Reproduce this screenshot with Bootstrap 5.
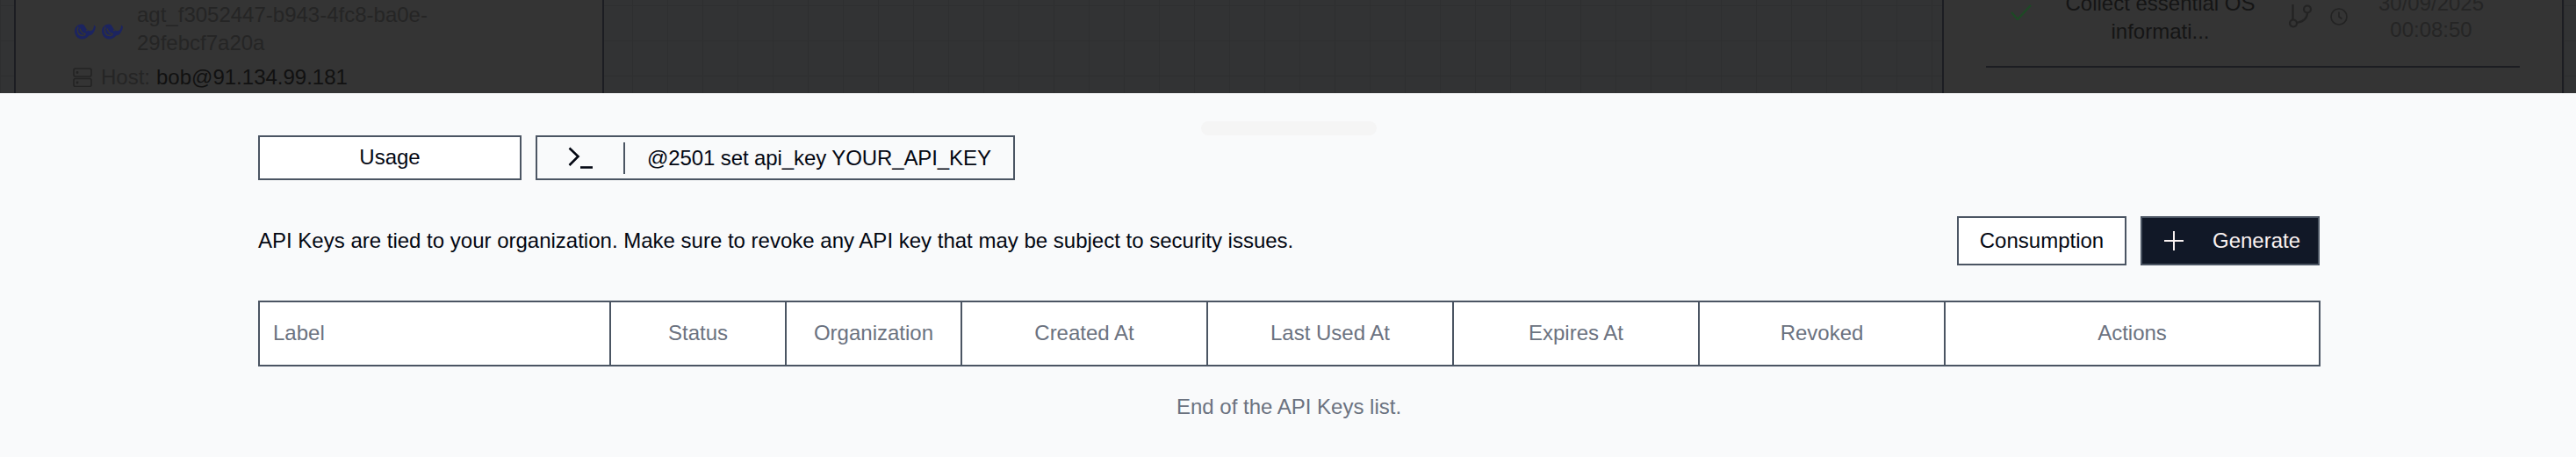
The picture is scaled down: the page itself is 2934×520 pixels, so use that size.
<!DOCTYPE html>
<html lang="en">
<head>
<meta charset="utf-8">
<title>API Keys</title>
<link href="https://cdn.jsdelivr.net/npm/bootstrap@5.3.0/dist/css/bootstrap.min.css" rel="stylesheet">
<style>
html,body{height:100%;}
body{margin:0;background:#f9fafb;font-family:"Liberation Sans",Arial,sans-serif;font-size:24px;color:#030712;overflow:hidden;}
.backdrop-area{height:106px;overflow:hidden;background-color:#323334;background-image:linear-gradient(#2e2f30 1px,transparent 1px),linear-gradient(90deg,#2e2f30 1px,transparent 1px);background-size:40px 40px;background-position:0 6px;}
.dim-strip-l{width:16px;flex:none;}
.dim-panel{background:#343434;border-left:2px solid #1c1d22;border-right:2px solid #1c1d22;flex:none;height:106px;overflow:hidden;color:#252525;line-height:32px;}
.dim-left{width:672px;padding:0 0 0 65px;justify-content:flex-end;}
.dim-grid{flex:1 1 auto;}
.dim-right{width:708px;padding:0 48px 29px 48px;justify-content:flex-end;}
.dim-strip-r{width:14px;flex:none;}
.whales{width:73px;flex:none;padding-left:2px;gap:7px;}
.whale-ic{width:24px;height:18px;display:block;}
.agent-id{width:480px;flex:none;margin-bottom:6px;}
.host-line{height:34px;gap:10px;margin-bottom:1px;}
.host-val{color:#111;margin-left:-3px;}
.job-row{border-bottom:2px solid #1c1d22;height:92px;padding-bottom:23px;flex:none;}
.job-check{width:24px;height:18px;margin-left:28px;margin-bottom:29px;flex:none;}
.job-name{width:293px;text-align:center;color:#151515;flex:none;line-height:32px;}
.job-icons{gap:20px;width:110px;flex:none;padding-bottom:20px;}
.job-date{width:160px;text-align:center;flex:none;line-height:30px;color:#252525;margin-left:-28px;margin-bottom:3px;}
.sheet{background:#f9fafb;padding:32px 292px 0 294px;height:414px;}
.grab-bar{width:200px;height:16px;background:#f5f5f5;border-radius:8px;margin:0 auto;}
.btn-sheet{--bs-btn-font-size:24px;--bs-btn-line-height:1.2;--bs-btn-border-radius:0;--bs-btn-border-width:2px;--bs-btn-border-color:#4b5563;--bs-btn-bg:#fff;--bs-btn-color:#030712;--bs-btn-hover-bg:#fff;--bs-btn-hover-border-color:#4b5563;--bs-btn-hover-color:#030712;font-family:inherit;display:flex;align-items:center;justify-content:center;padding:0;}
.usage-btn{width:300px;height:51px;}
.cmd-box{width:546px;height:51px;border:2px solid #4b5563;background:#f9fafb;margin-left:16px;}
.cmd-icon{width:98px;flex:none;padding-left:35px;}
.cmd-icon svg{display:block;}
.cmd-sep{width:2px;height:36px;background:#4b5563;flex:none;}
.cmd-text{padding-left:25px;white-space:nowrap;letter-spacing:-.1px;}
.intro-row{margin-top:41px;height:56px;}
.intro-text{margin:0;line-height:1.2;}
.cons-btn{width:193px;height:56px;}
.gen-btn{--bs-btn-bg:#111827;--bs-btn-color:#f9f1f1;--bs-btn-hover-bg:#111827;--bs-btn-hover-color:#f9f1f1;width:204px;height:56px;justify-content:flex-start;padding-left:25px;gap:33px;}
.keys-table{table-layout:fixed;width:2347px;margin:40px 0 0;border-collapse:collapse;--bs-table-bg:#fff;--bs-table-color:#6b7280;}
.keys-table th{height:73px;border:2px solid #4b5563;font-weight:400;text-align:center;vertical-align:middle;padding:0 16px 2px;color:#6b7280;background:#fff;box-shadow:none;}
.keys-table th.cell-left{text-align:left;padding-left:15px;}
.w-label{width:400px}.w-status{width:200px}.w-org{width:200px}.w-date{width:280px}.w-act{width:427px}
.list-end{margin:32px 0 0;color:#6b7280;text-align:center;line-height:28px;}
</style>
</head>
<body>
<div class="backdrop-area d-flex">
  <div class="dim-strip-l"></div>
  <div class="dim-panel dim-left d-flex flex-column">
    <div class="d-flex align-items-center">
      <div class="whales d-flex align-items-center">
        <svg class="whale-ic" viewBox="0 0 24 17"><path fill="#1c2460" d="M0 8C0 3 4 0 8 0c2 0 3 1 4 3 2 4 5 6 8 4 1-1 2-3 2-6l2 2c-1 6-4 10-8 10-1 2-4 4-8 4S0 13 0 8z"/><path fill="none" stroke="#343434" stroke-width="1.4" d="M4 3C2 8 4 13 9 13c2 0 3-1 3-2-2 0-5-2-6-6"/><circle cx="14" cy="7" r="1" fill="#343434"/></svg>
        <svg class="whale-ic" viewBox="0 0 24 17"><path fill="#1c2460" d="M0 8C0 3 4 0 8 0c2 0 3 1 4 3 2 4 5 6 8 4 1-1 2-3 2-6l2 2c-1 6-4 10-8 10-1 2-4 4-8 4S0 13 0 8z"/><path fill="none" stroke="#343434" stroke-width="1.4" d="M4 3C2 8 4 13 9 13c2 0 3-1 3-2-2 0-5-2-6-6"/><circle cx="14" cy="7" r="1" fill="#343434"/></svg>
      </div>
      <div class="agent-id">agt_f3052447-b943-4fc8-ba0e-<br>29febcf7a20a</div>
    </div>
    <div class="host-line d-flex align-items-center">
      <svg width="22" height="22" viewBox="0 0 22 22" fill="none" stroke="#232323" stroke-width="1.6"><rect x="1" y="1" width="20" height="9" rx="2"/><rect x="1" y="12.5" width="20" height="9" rx="2"/><circle cx="5" cy="5.5" r=".6"/><circle cx="5" cy="17" r=".6"/></svg>
      <span>Host:</span><span class="host-val">bob@91.134.99.181</span>
    </div>
  </div>
  <div class="dim-grid"></div>
  <div class="dim-panel dim-right d-flex flex-column">
    <div class="job-row d-flex align-items-end">
      <svg class="job-check" viewBox="0 0 24 18" fill="none" stroke="#1d4a25" stroke-width="2.2"><path d="M1 9l7 8L23 1"/></svg>
      <div class="job-name">Collect essential OS<br>informati...</div>
      <div class="job-icons d-flex align-items-center">
        <svg width="27" height="27" viewBox="0 0 27 27" fill="none" stroke="#232323" stroke-width="2.2"><path d="M4.500 0v17"/><circle cx="5" cy="21.500" r="4"/><circle cx="21" cy="5.500" r="4"/><path d="M21 9.500c0 6-4 10-12 11.500"/></svg>
        <svg width="20" height="20" viewBox="0 0 20 20" fill="none" stroke="#232323" stroke-width="1.6"><circle cx="10" cy="10" r="9"/><path d="M10 4.500V10l3.500 2.500"/></svg>
      </div>
      <div class="job-date">30/09/2025<br>00:08:50</div>
    </div>
  </div>
  <div class="dim-strip-r"></div>
</div>
<main class="sheet">
  <div class="grab-bar"></div>
  <div class="d-flex">
    <button type="button" class="btn btn-sheet usage-btn">Usage</button>
    <div class="cmd-box d-flex align-items-center">
      <div class="cmd-icon"><svg width="28" height="26" viewBox="0 0 28 26" fill="none" stroke="#030712" stroke-width="2.6"><path d="M1.500 1.500l10 9.500-10 10"/><path d="M14 23.500h14"/></svg></div>
      <div class="cmd-sep"></div>
      <div class="cmd-text">@2501 set api_key YOUR_API_KEY</div>
    </div>
  </div>
  <div class="intro-row d-flex align-items-center justify-content-between">
    <p class="intro-text">API Keys are tied to your organization. Make sure to revoke any API key that may be subject to security issues.</p>
    <div class="d-flex gap-3">
      <button type="button" class="btn btn-sheet cons-btn">Consumption</button>
      <button type="button" class="btn btn-sheet gen-btn"><svg width="22" height="22" viewBox="0 0 22 22" fill="none" stroke="#f9f1f1" stroke-width="2"><path d="M11 0v22M0 11h22"/></svg><span>Generate</span></button>
    </div>
  </div>
  <table class="table keys-table">
    <thead>
      <tr>
        <th class="cell-left w-label">Label</th>
        <th class="w-status">Status</th>
        <th class="w-org">Organization</th>
        <th class="w-date">Created At</th>
        <th class="w-date">Last Used At</th>
        <th class="w-date">Expires At</th>
        <th class="w-date">Revoked</th>
        <th class="w-act">Actions</th>
      </tr>
    </thead>
  </table>
  <p class="list-end">End of the API Keys list.</p>
</main>
<script src="https://cdn.jsdelivr.net/npm/bootstrap@5.3.0/dist/js/bootstrap.bundle.min.js"></script>
</body>
</html>
